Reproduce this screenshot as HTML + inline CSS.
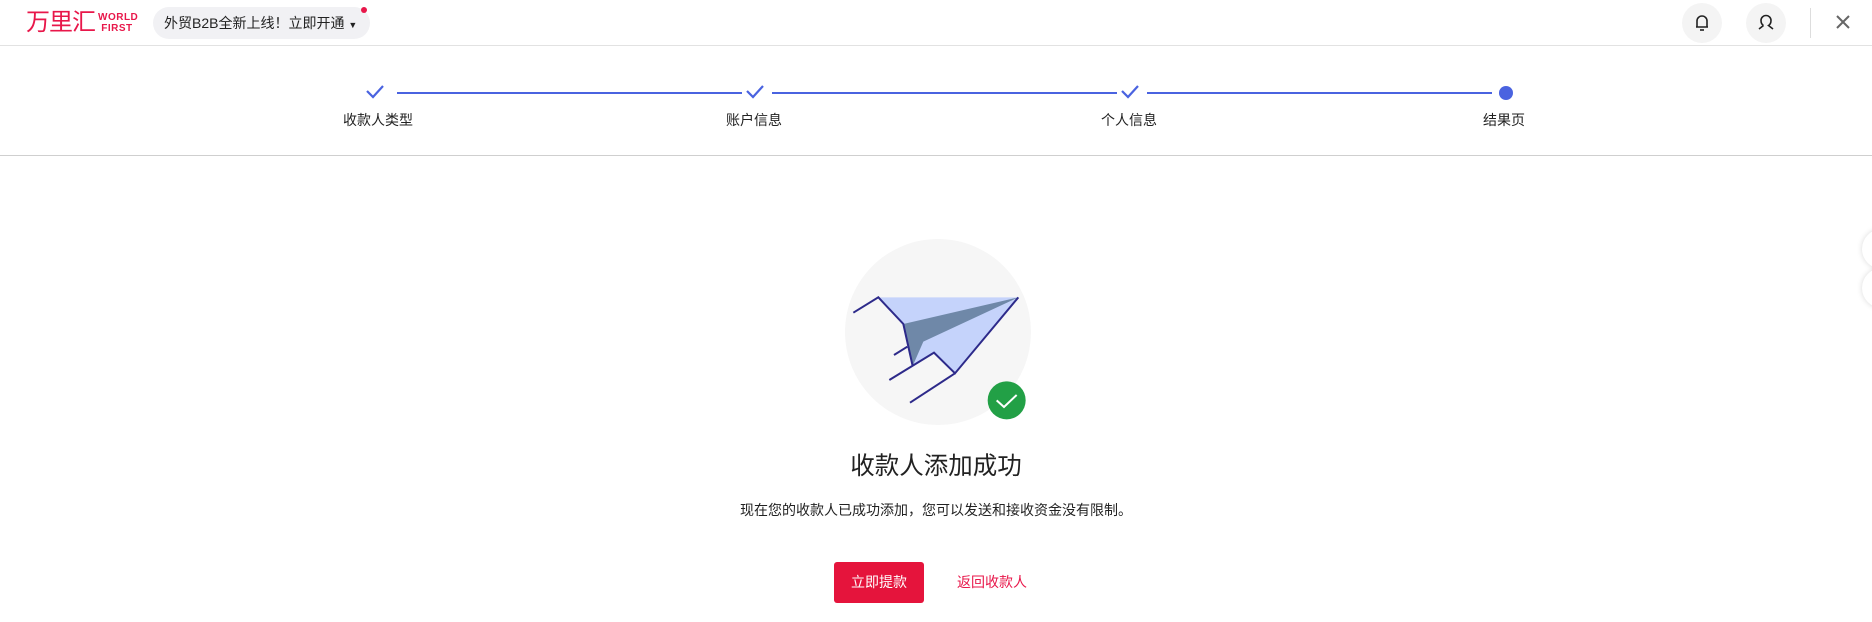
<!DOCTYPE html>
<html><head><meta charset="utf-8"><style>
*{margin:0;padding:0;box-sizing:border-box}
body{width:1872px;height:622px;background:#fff;position:relative;overflow:hidden;font-family:"Liberation Sans","Noto Sans CJK SC",sans-serif;color:#222}
.a{position:absolute}
</style></head><body>
<div class="a" style="left:0;top:0;width:1872px;height:46px;border-bottom:1px solid #e2e2e2"></div>
<div class="a" style="left:26px;top:9px;font-size:24px;color:#e8174a;line-height:28px;letter-spacing:-1px">万里汇</div>
<div class="a" style="left:98px;top:12px;font-size:10px;font-weight:bold;color:#e8174a;line-height:11px;letter-spacing:0.5px;font-family:'Liberation Sans',sans-serif">WORLD<br>&nbsp;FIRST</div>
<div class="a" style="left:153px;top:7px;width:217px;height:32px;border-radius:16px;background:#f1f1f4;font-size:14px;line-height:32px;padding-left:11px">外贸B2B全新上线！立即开通 <span style="font-size:9px">▼</span></div>
<div class="a" style="left:361px;top:7px;width:6px;height:6px;border-radius:50%;background:#e8174a"></div>
<div class="a" style="left:1682px;top:3px;width:40px;height:40px;border-radius:50%;background:#f4f4f4"></div>
<svg class="a" style="left:1692px;top:13px" width="20" height="20" viewBox="0 0 20 20" fill="none" stroke="#222" stroke-width="1.6"><path d="M5 14V8a5 5 0 0 1 10 0v6H4h12"/><path d="M8 17h4"/></svg>
<div class="a" style="left:1746px;top:3px;width:40px;height:40px;border-radius:50%;background:#f4f4f4"></div>
<svg class="a" style="left:1756px;top:13px" width="20" height="20" viewBox="0 0 20 20" fill="none" stroke="#222" stroke-width="1.6"><path d="M7.5 12.5C5 11 5 9 5 7.5a5 5 0 0 1 10 0c0 1.5 0 3.5-2.5 5L17 16M7.5 12.5L3 16"/></svg>
<div class="a" style="left:1810px;top:8px;width:1px;height:30px;background:#ddd"></div>
<svg class="a" style="left:1835px;top:14px" width="16" height="16" viewBox="0 0 16 16" stroke="#666" stroke-width="2"><path d="M2 2l12 12M14 2L2 14"/></svg>

<div class="a" style="left:0;top:155px;width:1872px;height:1px;background:#cfcfcf"></div>
<div class="a" style="left:397px;top:92px;width:345px;height:2px;background:#4a63e0"></div>
<div class="a" style="left:772px;top:92px;width:345px;height:2px;background:#4a63e0"></div>
<div class="a" style="left:1147px;top:92px;width:345px;height:2px;background:#4a63e0"></div>
<svg class="a" style="left:365px;top:84px" width="20" height="16" viewBox="0 0 20 16" fill="none" stroke="#4a63e0" stroke-width="2.2"><path d="M2 7l6 6L18 2"/></svg>
<svg class="a" style="left:745px;top:84px" width="20" height="16" viewBox="0 0 20 16" fill="none" stroke="#4a63e0" stroke-width="2.2"><path d="M2 7l6 6L18 2"/></svg>
<svg class="a" style="left:1120px;top:84px" width="20" height="16" viewBox="0 0 20 16" fill="none" stroke="#4a63e0" stroke-width="2.2"><path d="M2 7l6 6L18 2"/></svg>
<div class="a" style="left:1499px;top:86px;width:14px;height:14px;border-radius:50%;background:#4a63e0"></div>
<div class="a" style="left:313px;top:110px;width:130px;text-align:center;font-size:14px">收款人类型</div>
<div class="a" style="left:689px;top:110px;width:130px;text-align:center;font-size:14px">账户信息</div>
<div class="a" style="left:1064px;top:110px;width:130px;text-align:center;font-size:14px">个人信息</div>
<div class="a" style="left:1439px;top:110px;width:130px;text-align:center;font-size:14px">结果页</div>

<div class="a" style="left:845px;top:239px;width:186px;height:186px;border-radius:50%;background:#f6f6f6"></div>
<svg class="a" style="left:820px;top:220px" width="240" height="210" viewBox="0 0 720 630">
<polygon points="175,232 595,232 405,460 342,398 278,438 250,312" fill="#c5d3fb"/>
<polygon points="250,312 595,232 310,365 278,438" fill="#6f88a8"/>
<g fill="none" stroke="#2d2a8a" stroke-width="6">
<polyline points="100,278 175,232 250,312 278,438"/>
<polyline points="595,232 405,460 342,398 208,480"/>
<line x1="405" y1="460" x2="270" y2="548"/>
<line x1="222" y1="405" x2="262" y2="380"/>
</g>
<circle cx="560" cy="541" r="57" fill="#22a046"/>
<polyline points="530,541 552,561 590,525" fill="none" stroke="#fff" stroke-width="6"/>
</svg>
<div class="a" style="left:0;top:450px;width:1872px;text-align:center;font-size:24.5px;line-height:34px;color:#222">收款人添加成功</div>
<div class="a" style="left:0;top:500px;width:1872px;text-align:center;font-size:14px;line-height:20px;color:#222">现在您的收款人已成功添加，您可以发送和接收资金没有限制。</div>
<div class="a" style="left:834px;top:562px;width:90px;height:41px;border-radius:3px;background:#e5143c;color:#fff;font-size:14px;line-height:41px;text-align:center">立即提款</div>
<div class="a" style="left:957px;top:572px;font-size:14px;line-height:20px;color:#e8174a">返回收款人</div>
<div class="a" style="left:1862px;top:229px;width:40px;height:40px;border-radius:50%;background:#fff;box-shadow:0 0 6px rgba(0,0,0,.15)"></div>
<div class="a" style="left:1862px;top:268px;width:40px;height:40px;border-radius:50%;background:#fff;box-shadow:0 0 6px rgba(0,0,0,.15)"></div>
</body></html>
